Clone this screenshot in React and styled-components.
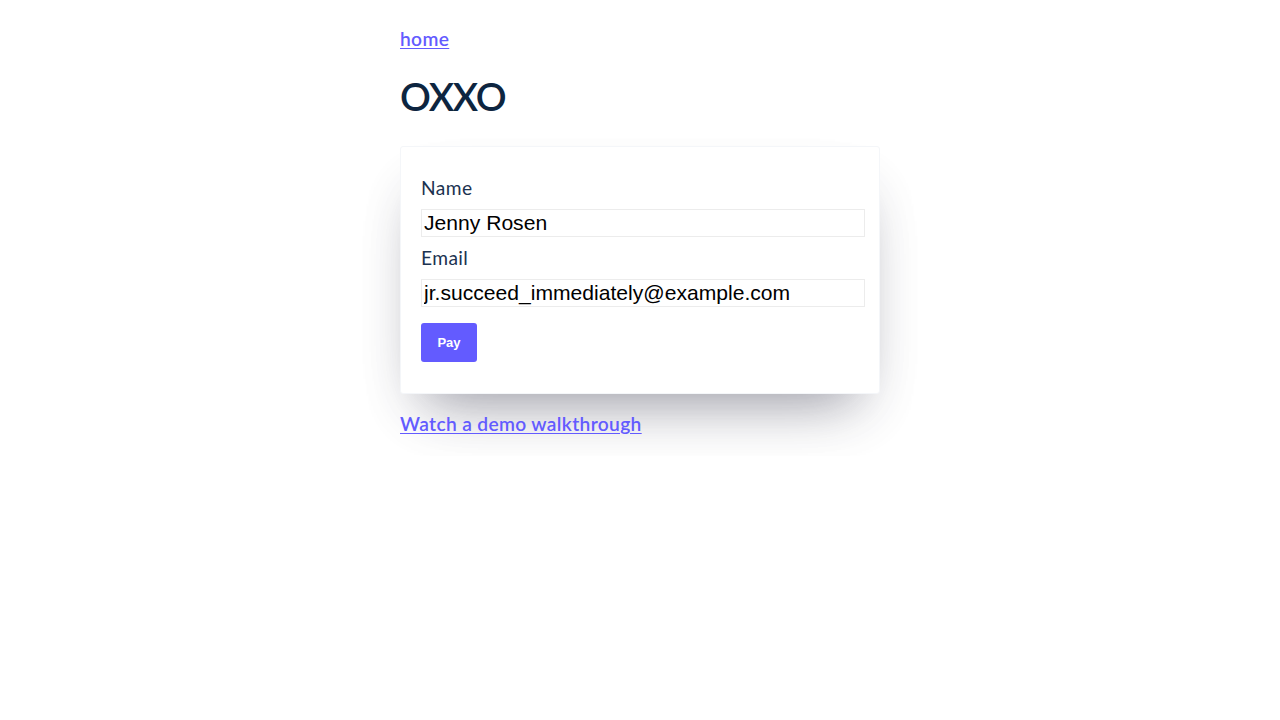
import React from "react";
import styled, { createGlobalStyle } from "styled-components";

const Global = createGlobalStyle`
  html, body { margin: 0; padding: 0; background: #fff; }
  body {
    font-family: Lato, "Open Sans", sans-serif;
    font-size: 19.2px;
    color: #0a2540;
  }
`;

const Page = styled.div`
  display: flex;
  justify-content: center;
  padding: 27px 20px 20px;
`;

const Main = styled.main`
  width: 480px;
  display: flex;
  flex-direction: column;
  align-items: flex-start;
`;

const Link = styled.a`
  color: #635bff;
  font-weight: 600;
  font-size: 19.2px;
  line-height: 24px;
  text-decoration: underline;
  text-underline-offset: 2px;
  letter-spacing: 0.35px;
`;

const Title = styled.h1`
  margin: 23px 0 28px;
  font-size: 38.4px;
  line-height: 44px;
  font-weight: 600;
  color: #0d2540;
  letter-spacing: -1.2px;
`;

const Card = styled.form`
  box-sizing: border-box;
  width: 480px;
  border: 1px solid #f4f6f9;
  border-radius: 3px;
  padding: 29px 20px 31px;
  margin: 0 0 18px;
  background: #fff;
  box-shadow: 0 30px 50px -20px rgba(50, 50, 93, 0.25),
    0 30px 60px -30px rgba(0, 0, 0, 0.3);
`;

const Label = styled.label`
  display: block;
  font-size: 19.2px;
  line-height: 24px;
  font-weight: 400;
  letter-spacing: 0.4px;
  color: #1b3250;
  margin: ${(p) => (p.$first ? "0" : "9px")} 0 9px;
`;

const Input = styled.input`
  display: block;
  box-sizing: border-box;
  width: 444px;
  height: 28px;
  margin: 0;
  padding: 0 2px;
  border: 1px solid #ececec;
  border-radius: 0;
  font-family: "Liberation Sans", Arial, sans-serif;
  font-size: 21.1px;
  color: #000;
  outline: none;
  background: #fff;
`;

const Button = styled.button`
  display: block;
  margin-top: 16px;
  background: #635bff;
  color: #fff;
  border: 0;
  border-radius: 3px;
  width: 56px;
  height: 39px;
  padding: 0;
  font-family: "Liberation Sans", Arial, sans-serif;
  font-size: 13px;
  font-weight: 700;
  cursor: pointer;
`;

export default function App() {
  return (
    <>
      <Global />
      <Page>
        <Main>
          <Link href="#">home</Link>
          <Title>OXXO</Title>
          <Card onSubmit={(e) => e.preventDefault()}>
            <Label $first htmlFor="name">Name</Label>
            <Input id="name" defaultValue="Jenny Rosen" />
            <Label htmlFor="email">Email</Label>
            <Input id="email" defaultValue="jr.succeed_immediately@example.com" />
            <Button type="submit">Pay</Button>
          </Card>
          <Link href="#">Watch a demo walkthrough</Link>
        </Main>
      </Page>
    </>
  );
}
